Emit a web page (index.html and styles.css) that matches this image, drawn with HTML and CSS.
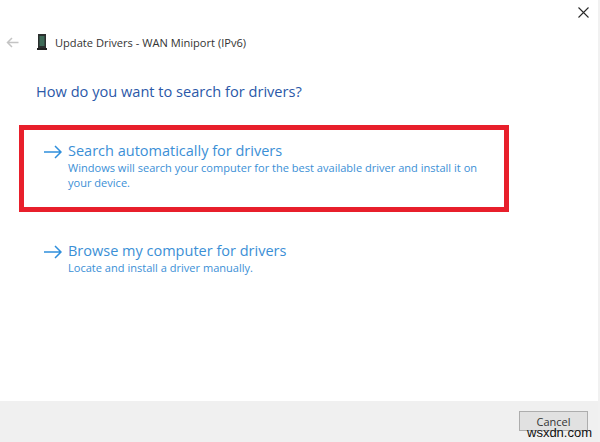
FILE: index.html
```html
<!DOCTYPE html>
<html lang="en">
<head>
<meta charset="utf-8">
<title>Update Drivers</title>
<link rel="stylesheet" href="styles.css">
</head>
<body>
<div class="dialog">
  <div class="main">
    <div class="close-row">
      <svg class="close" width="11" height="11" viewBox="0 0 11 11"><path d="M.5.5l10 10M10.500.5l-10 10" stroke="#2a2a2a" stroke-width="1.1" fill="none"/></svg>
    </div>
    <div class="titlebar">
      <svg class="back" width="13" height="11" viewBox="0 0 13 11"><path d="M12.500 5.500H1.500M6 1L1.500 5.500 6 10" stroke="#c4c4c4" stroke-width="1.500" fill="none"/></svg>
      <svg class="device" width="10" height="16" viewBox="0 0 10 16"><rect x="1" y="0" width="8" height="14" fill="#2b2f2e"/><rect x="2.500" y="2" width="5" height="10" fill="#3f6b58"/><rect x="0" y="14" width="10" height="2" fill="#222"/></svg>
      <span class="title">Update Drivers - WAN Miniport (IPv6)</span>
    </div>
    <h1 class="heading">How do you want to search for drivers?</h1>
    <div class="option highlighted">
      <svg class="arrow" width="18" height="14" viewBox="0 0 18 14"><path d="M0 7h17M11 1l6 6-6 6" stroke="#2f8fdc" stroke-width="1.500" fill="none"/></svg>
      <div class="option-text">
        <div class="option-title">Search automatically for drivers</div>
        <div class="option-desc">Windows will search your computer for the best available driver and install it on your device.</div>
      </div>
    </div>
    <div class="option second">
      <svg class="arrow" width="18" height="14" viewBox="0 0 18 14"><path d="M0 7h17M11 1l6 6-6 6" stroke="#2f8fdc" stroke-width="1.500" fill="none"/></svg>
      <div class="option-text">
        <div class="option-title">Browse my computer for drivers</div>
        <div class="option-desc">Locate and install a driver manually.</div>
      </div>
    </div>
  </div>
  <div class="footer">
    <button class="cancel">Cancel</button>
  </div>
  <div class="watermark">wsxdn.com</div>
</div>
</body>
</html>
```
FILE: styles.css
```css
html, body {
  margin: 0;
  padding: 0;
  background: #fff;
}
.dialog {
  position: relative;
  width: 600px;
  height: 442px;
  display: flex;
  flex-direction: column;
  box-sizing: border-box;
  border-right: 2px solid #f1f1f1;
  font-family: "Open Sans", "Noto Sans", sans-serif;
  overflow: hidden;
}
.main {
  flex: 1;
  display: flex;
  flex-direction: column;
}
.close-row {
  display: flex;
  justify-content: flex-end;
  padding: 7px 9px 0 0;
  height: 11px;
}
.titlebar {
  display: flex;
  align-items: center;
  margin-top: 16px;
  padding-left: 6px;
  height: 16px;
}
.device {
  margin-left: 18px;
}
.title {
  margin-left: 8px;
  font-size: 11.100px;
  color: #333;
}
.heading {
  margin: 0 0 0 36px;
  padding-top: 31px;
  font-size: 14.600px;
  line-height: 20px;
  font-weight: 400;
  color: #2b58a8;
}
.option {
  display: flex;
  align-items: flex-start;
}
.highlighted {
  box-sizing: border-box;
  margin: 24px 0 0 19px;
  width: 490px;
  height: 87px;
  border: 5px solid #e81f2b;
  padding: 11px 20px 0 20px;
}
.second {
  margin: 29px 0 0 44px;
  width: 440px;
}
.arrow {
  flex: none;
  margin-top: 4px;
  margin-right: 6px;
}
.option-title {
  font-size: 14.500px;
  line-height: 19px;
  color: #3b8fd6;
}
.option-desc {
  font-size: 11.050px;
  line-height: 15px;
  color: #3b8fd6;
}
.footer {
  height: 41px;
  background: #f0f0f0;
  display: flex;
  justify-content: flex-end;
  align-items: flex-start;
  padding: 10px 10px 0 0;
  box-sizing: border-box;
}
.cancel {
  width: 69px;
  height: 20px;
  background: #e1e1e1;
  border: 1px solid #adadad;
  padding: 0;
  font-family: "Open Sans", "Noto Sans", sans-serif;
  font-size: 11px;
  color: #333;
}
.watermark {
  position: absolute;
  left: 527px;
  top: 426px;
  font-family: "Liberation Sans", sans-serif;
  font-size: 13px;
  line-height: 14px;
  color: #111;
}
```
